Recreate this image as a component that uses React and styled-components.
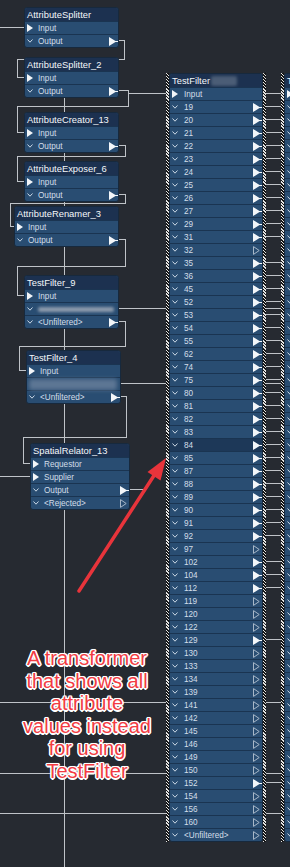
import styled, { createGlobalStyle } from 'styled-components';

const Global = createGlobalStyle`
  html, body { margin: 0; padding: 0; background: #262a31; }
  body { font-family: "Liberation Sans", Arial, sans-serif; }
`;

const Canvas = styled.div`
  position: relative;
  width: 290px;
  height: 867px;
  overflow: hidden;
  background: #262a31;
`;

const Wires = styled.svg`
  position: absolute;
  left: 0;
  top: 0;
`;

const stripe = 'repeating-linear-gradient(45deg, #e4e4e4 0 1px, #141414 1px 2.2px)';

// diagram node: its place on the canvas is the content itself
const Node = styled.div`
  position: absolute;
  left: ${p => p.$x}px;
  top: ${p => p.$y}px;
  width: ${p => p.$w}px;
  box-sizing: border-box;
  padding: ${p => (p.$marquee ? '0 3px' : '0')};
  background: ${p =>
    p.$marquee
      ? `${stripe} left top / 3px 100% no-repeat, ${stripe} right top / 3px 100% no-repeat`
      : 'none'};
`;

const Box = styled.div`
  background: #294d72;
  border: 1px solid #17293d;
  border-radius: 3px;
  overflow: hidden;
`;

const Title = styled.div`
  height: 13px;
  line-height: 13px;
  background: #1c3150;
  color: #f4f7fa;
  font-size: 9.4px;
  padding-left: 2px;
  white-space: nowrap;
  overflow: hidden;
  display: flex;
  align-items: center;
  gap: 1px;
`;

const Row = styled.div`
  height: 12px;
  border-top: 1px solid #1a3451;
  display: flex;
  align-items: center;
  font-size: 8.2px;
  color: #d3dee9;
  white-space: nowrap;
  background: ${p => (p.$sel ? '#1d3858' : 'transparent')};
`;

const Lead = styled.span`
  flex: none;
  width: ${p => p.$w || 11}px;
  padding-left: 2px;
  display: flex;
  align-items: center;
`;

const Tail = styled.span`
  margin-left: auto;
  margin-right: ${p => (p.$hollow ? 2 : 0)}px;
  display: flex;
  align-items: center;
`;

const Blur = styled.span`
  display: block;
  width: ${p => p.$w}px;
  height: ${p => p.$h}px;
  background: ${p => p.$c};
  filter: blur(${p => p.$r}px);
  border-radius: 2px;
`;

const Note = styled.div`
  position: absolute;
  left: 8px;
  top: 647px;
  width: 158px;
  text-align: center;
  font-family: "Liberation Sans", Arial, sans-serif;
  font-size: 20px;
  line-height: 22.6px;
  color: #f23c43;
  text-shadow:
    1.5px 0 0 #fff, -1.5px 0 0 #fff, 0 1.5px 0 #fff, 0 -1.5px 0 #fff,
    1px 1px 0 #fff, -1px 1px 0 #fff, 1px -1px 0 #fff, -1px -1px 0 #fff,
    0 0 2px rgba(255, 255, 255, 0.8);
`;

const Chevron = () => (
  <svg width="6" height="4" viewBox="0 0 6 4">
    <path d="M0.5 0.5 L3 3.2 L5.5 0.5" fill="none" stroke="#cbd8e5" strokeWidth="1" />
  </svg>
);

const InTri = () => (
  <svg width="6" height="8" viewBox="0 0 6 8">
    <path d="M0 0 L6 4 L0 8Z" fill="#f3f6f9" />
  </svg>
);

const OutTri = ({ hollow }) =>
  hollow ? (
    <svg width="7" height="9" viewBox="0 0 7 9">
      <path d="M0.5 0.6 L6.2 4.5 L0.5 8.4Z" fill="none" stroke="#a7b7c8" strokeWidth="1" />
    </svg>
  ) : (
    <svg width="9" height="9" viewBox="0 0 9 9">
      <path d="M0 0 L6.5 4 L9 4 L9 5 L6.5 5 L0 9Z" fill="#f3f6f9" />
    </svg>
  );

const Port = ({ p, lead }) => (
  <Row $sel={p.sel}>
    {p.blurRow ? (
      <Blur $w={88} $h={11} $c="#5d7694" $r={2.2} style={{ marginLeft: 2 }} />
    ) : (
      <>
        <Lead $w={lead}>{p.in ? <InTri /> : <Chevron />}</Lead>
        {p.blur ? <Blur $w={76} $h={5} $c="#8d9bad" $r={1.4} /> : p.label}
        {p.out && (
          <Tail $hollow={p.out === 'hollow'}>
            <OutTri hollow={p.out === 'hollow'} />
          </Tail>
        )}
      </>
    )}
  </Row>
);

const Transformer = ({ x, y, w, title, ports, marquee, lead, titleBlur }) => (
  <Node $x={x} $y={y} $w={w} $marquee={marquee}>
    <Box>
      <Title>
        {title}
        {titleBlur && <Blur $w={26} $h={10} $c="#4b5d76" $r={1.6} />}
      </Title>
      {ports.map((p, i) => (
        <Port key={i} p={p} lead={lead} />
      ))}
    </Box>
  </Node>
);

const inOut = [
  { in: true, label: 'Input' },
  { label: 'Output', out: 'filled' },
];

const hollowSet = new Set(['32', '97', '119', '120', '122', '130', '133', '134', '139', '141', '142', '145', '146', '149', '150', '154', '156', '160']);
const values = ['19', '20', '21', '22', '23', '24', '25', '26', '27', '29', '31', '32', '35', '36', '45', '52', '53', '54', '55', '62', '74', '75', '80', '81', '82', '83', '84', '85', '87', '88', '89', '90', '91', '92', '97', '102', '104', '112', '119', '120', '122', '129', '130', '133', '134', '139', '141', '142', '145', '146', '149', '150', '152', '154', '156', '160'];

const bigPorts = [
  { in: true, label: 'Input' },
  ...values.map(v => ({ label: v, out: hollowSet.has(v) ? 'hollow' : 'filled', sel: v === '84' })),
  { label: '<Unfiltered>', out: 'hollow' },
];

// next transformer, only its left edge is in view: labels lie past the window
const nextPorts = [{ in: true }, ...values.map(() => ({})), {}];

const wires = [
  'M0 27.5H25',
  'M118 40.5H124.5V59.5H17.5V77.5H25',
  'M118 90.5H128.5V106.5H17.5V132.5H25',
  'M128 93.5H290',
  'M64.5 97V867',
  'M118 145.5H125.5V156.5H17.5V181.5H25',
  'M118 194.5H125.5V203.5H10.5V226.5H15',
  'M118 239.5H125.5V266.5H17.5V295.5H25',
  'M118 308.5H290',
  'M118 321.5H125.5V346.5H19.5V370.5H27',
  'M120 383.5H290',
  'M120 396.5H126.5V437.5H23.5V463.5H31',
  'M0 476.5H31',
  'M129 489.5H146',
  'M0 702.5H290',
  'M0 773.5H290',
  'M0 813.5H290',
  ...values
    .map((v, i) => (hollowSet.has(v) ? null : `M263 ${93.5 + 13 * (i + 1)}H284`))
    .filter(Boolean),
];

export default function App() {
  return (
    <>
      <Global />
      <Canvas>
        <Wires width="290" height="867">
          {wires.map((d, i) => (
            <path key={i} d={d} fill="none" stroke="#bfc3c8" strokeWidth="1" shapeRendering="crispEdges" />
          ))}
        </Wires>

        <Transformer x={24} y={7} w={95} title="AttributeSplitter" ports={inOut} />
        <Transformer x={24} y={57} w={95} title="AttributeSplitter_2" ports={inOut} />
        <Transformer x={24} y={112} w={95} title="AttributeCreator_13" ports={inOut} />
        <Transformer x={24} y={161} w={95} title="AttributeExposer_6" ports={inOut} />
        <Transformer x={14} y={206} w={105} title="AttributeRenamer_3" ports={inOut} />
        <Transformer
          x={24}
          y={275}
          w={95}
          title="TestFilter_9"
          ports={[{ in: true, label: 'Input' }, { blur: true }, { label: '<Unfiltered>', out: 'filled' }]}
        />
        <Transformer
          x={26}
          y={350}
          w={95}
          title="TestFilter_4"
          ports={[{ in: true, label: 'Input' }, { blurRow: true }, { label: '<Unfiltered>', out: 'filled' }]}
        />
        <Transformer
          x={30}
          y={443}
          w={100}
          title="SpatialRelator_13"
          ports={[
            { in: true, label: 'Requestor' },
            { in: true, label: 'Supplier' },
            { label: 'Output', out: 'filled' },
            { label: '<Rejected>', out: 'hollow' },
          ]}
        />

        <Transformer x={166} y={73} w={100} title="TestFilter" titleBlur marquee lead={12} ports={bigPorts} />
        <Transformer x={281} y={73} w={100} title="TestFilter" marquee ports={nextPorts} />

        <svg width="290" height="867" style={{ position: 'absolute', left: 0, top: 0, pointerEvents: 'none' }}>
          <path d="M79 591 L155 474" stroke="#e8343b" strokeWidth="3.5" strokeLinecap="round" />
          <polygon points="166,458 147.5,472 160.5,480.5" fill="#e8343b" />
        </svg>

        <Note>
          A transformer
          <br />
          that shows all
          <br />
          attribute
          <br />
          values instead
          <br />
          for using
          <br />
          TestFilter
        </Note>
      </Canvas>
    </>
  );
}
